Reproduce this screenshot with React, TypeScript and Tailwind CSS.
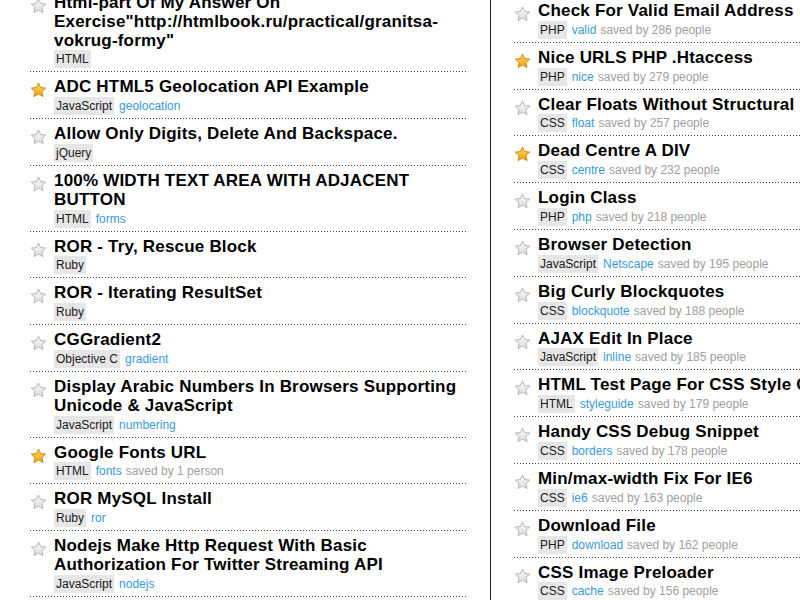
import React from 'react';

interface Snippet {
  title: string;
  lang: string;
  tag?: string;
  saved?: string;
  fav?: boolean;
}

const left: Snippet[] = [
  { title: 'Html-part Of My Answer On Exercise"http://htmlbook.ru/practical/granitsa-vokrug-formy"', lang: 'HTML' },
  { title: 'ADC HTML5 Geolocation API Example', lang: 'JavaScript', tag: 'geolocation', fav: true },
  { title: 'Allow Only Digits, Delete And Backspace.', lang: 'jQuery' },
  { title: '100% WIDTH TEXT AREA WITH ADJACENT BUTTON', lang: 'HTML', tag: 'forms' },
  { title: 'ROR - Try, Rescue Block', lang: 'Ruby' },
  { title: 'ROR - Iterating ResultSet', lang: 'Ruby' },
  { title: 'CGGradient2', lang: 'Objective C', tag: 'gradient' },
  { title: 'Display Arabic Numbers In Browsers Supporting Unicode & JavaScript', lang: 'JavaScript', tag: 'numbering' },
  { title: 'Google Fonts URL', lang: 'HTML', tag: 'fonts', saved: 'saved by 1 person', fav: true },
  { title: 'ROR MySQL Install', lang: 'Ruby', tag: 'ror' },
  { title: 'Nodejs Make Http Request With Basic Authorization For Twitter Streaming API', lang: 'JavaScript', tag: 'nodejs' },
];

const right: Snippet[] = [
  { title: 'Check For Valid Email Address', lang: 'PHP', tag: 'valid', saved: 'saved by 286 people' },
  { title: 'Nice URLS PHP .Htaccess', lang: 'PHP', tag: 'nice', saved: 'saved by 279 people', fav: true },
  { title: 'Clear Floats Without Structural Markup', lang: 'CSS', tag: 'float', saved: 'saved by 257 people' },
  { title: 'Dead Centre A DIV', lang: 'CSS', tag: 'centre', saved: 'saved by 232 people', fav: true },
  { title: 'Login Class', lang: 'PHP', tag: 'php', saved: 'saved by 218 people' },
  { title: 'Browser Detection', lang: 'JavaScript', tag: 'Netscape', saved: 'saved by 195 people' },
  { title: 'Big Curly Blockquotes', lang: 'CSS', tag: 'blockquote', saved: 'saved by 188 people' },
  { title: 'AJAX Edit In Place', lang: 'JavaScript', tag: 'inline', saved: 'saved by 185 people' },
  { title: 'HTML Test Page For CSS Style Guides', lang: 'HTML', tag: 'styleguide', saved: 'saved by 179 people' },
  { title: 'Handy CSS Debug Snippet', lang: 'CSS', tag: 'borders', saved: 'saved by 178 people' },
  { title: 'Min/max-width Fix For IE6', lang: 'CSS', tag: 'ie6', saved: 'saved by 163 people' },
  { title: 'Download File', lang: 'PHP', tag: 'download', saved: 'saved by 162 people' },
  { title: 'CSS Image Preloader', lang: 'CSS', tag: 'cache', saved: 'saved by 156 people' },
];

function Star({ fav }: { fav?: boolean }) {
  const id = fav ? 'starGold' : 'starGray';
  return (
    <svg width="17" height="16" viewBox="0 0 17 16" className="shrink-0">
      <defs>
        <linearGradient id={id} x1="0" y1="0" x2="0" y2="1">
          {fav ? (
            <>
              <stop offset="0" stopColor="#ffdd66" />
              <stop offset="1" stopColor="#f0a010" />
            </>
          ) : (
            <>
              <stop offset="0" stopColor="#fafafa" />
              <stop offset="1" stopColor="#dedede" />
            </>
          )}
        </linearGradient>
      </defs>
      <path
        d="M8.5 1 L10.6 5.6 L15.7 6.1 L11.9 9.5 L13 14.6 L8.5 12 L4 14.6 L5.1 9.5 L1.3 6.1 L6.4 5.6 Z"
        fill={`url(#${id})`}
        stroke={fav ? '#d08a10' : '#b5b5b5'}
        strokeWidth="1"
        strokeLinejoin="round"
      />
    </svg>
  );
}

function Item({ s }: { s: Snippet }) {
  return (
    <li className="flex pl-[2px] pt-[6px] pb-[4px] bg-[linear-gradient(to_right,#444_1px,transparent_1px)] bg-[length:3px_1px] bg-repeat-x bg-bottom">
      <div className="w-[24px] pt-[4px]">
        <Star fav={s.fav} />
      </div>
      <div className="min-w-0 flex-1">
        <h3 className="text-[17px] leading-[18.8px] font-bold tracking-[0.2px] text-black">{s.title}</h3>
        <div className="flex items-center text-[12px] leading-[18px] whitespace-nowrap">
          <span className="bg-[#e6e6e6] px-[2px] text-[#1a1a1a]">{s.lang}</span>
          {s.tag && <span className="ml-[5px] text-[#3a9ad6]">{s.tag}</span>}
          {s.saved && <span className="ml-[4px] text-[#a0a0a0]">{s.saved}</span>}
        </div>
      </div>
    </li>
  );
}

export default function App() {
  return (
    <div className="w-[800px] h-[600px] overflow-hidden bg-white font-['Liberation_Sans',Arial,sans-serif]">
      <div className="flex h-full">
        <div className="w-[491px] shrink-0 border-r border-[#222] pl-[28px] pr-[23px]">
          <ul className="-mt-[12px]">
            {left.map((s, i) => <Item key={i} s={s} />)}
          </ul>
        </div>
        <div className="w-[460px] shrink-0 pl-[21px]">
          <ul className="-mt-[4px]">
            {right.map((s, i) => <Item key={i} s={s} />)}
          </ul>
        </div>
      </div>
    </div>
  );
}
